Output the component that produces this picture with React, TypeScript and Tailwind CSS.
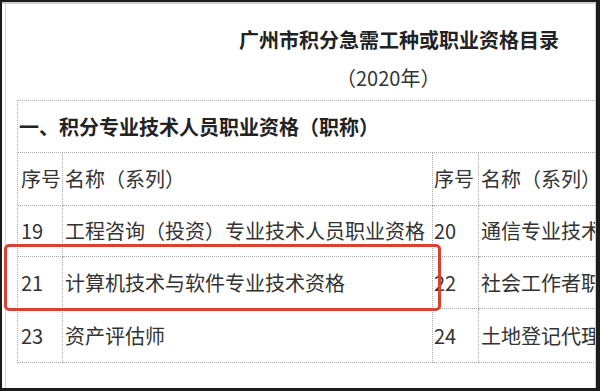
const rows = [
  { a: "19", b: "工程咨询（投资）专业技术人员职业资格", c: "20", d: "通信专业技术人员职业资格", h: "h-[51px]" },
  { a: "21", b: "计算机技术与软件专业技术资格", c: "22", d: "社会工作者职业资格", h: "h-[52px]" },
  { a: "23", b: "资产评估师", c: "24", d: "土地登记代理专业人员职业资格", h: "h-[54px]" },
];

function Row({ a, b, c, d, h }: { a: string; b: string; c: string; d: string; h: string }) {
  const cell = "flex items-center whitespace-nowrap border-r border-b border-dotted border-[#a8a8a8]";
  return (
    <div className={`grid grid-cols-[45px_370px_46px_1fr] ${h}`}>
      <div className={`${cell} pl-[3px]`}>{a}</div>
      <div className={`${cell} pl-[2px]`}>{b}</div>
      <div className={`${cell} pl-[1px]`}>{c}</div>
      <div className={`${cell} pl-[2px]`}>{d}</div>
    </div>
  );
}

export default function App() {
  return (
    <div className="w-[600px] h-[391px] bg-[#1c1c1c] pt-[2px] pl-[2px] pr-[4px] pb-[3px] font-['Noto_Sans_CJK_SC',sans-serif] text-[#333]">
      <div className="relative h-full bg-white overflow-hidden border-t-2 border-r border-[#cfcfcf]">
        <div className="ml-[3px] h-full border-l border-[#d6d6d6] pt-[22px]">
          <div className="pl-[233px] text-[20px] leading-[28px] font-bold text-[#222] whitespace-nowrap">
            广州市积分急需工种或职业资格目录
          </div>
          <div className="mt-[10px] pl-[330px] text-[20px] leading-[28px] text-[#333] whitespace-nowrap">
            （2020年）
          </div>
          <div className="mt-[8px] ml-[11px] w-[720px] border-l border-t border-dotted border-[#a8a8a8] text-[20px] leading-[28px]">
            <div className="h-[52px] flex items-center pl-[1px] border-b border-dotted border-[#a8a8a8] font-bold text-[#222] whitespace-nowrap">
              一、积分专业技术人员职业资格（职称）
            </div>
            <Row a="序号" b="名称（系列）" c="序号" d="名称（系列）" h="h-[53px]" />
            {rows.map((r) => (
              <Row key={r.a} {...r} />
            ))}
          </div>
        </div>
        <div className="absolute left-[2px] top-[240px] w-[437px] h-[67px] border-[3px] border-[#d8432f] rounded-[5px]" />
      </div>
    </div>
  );
}
